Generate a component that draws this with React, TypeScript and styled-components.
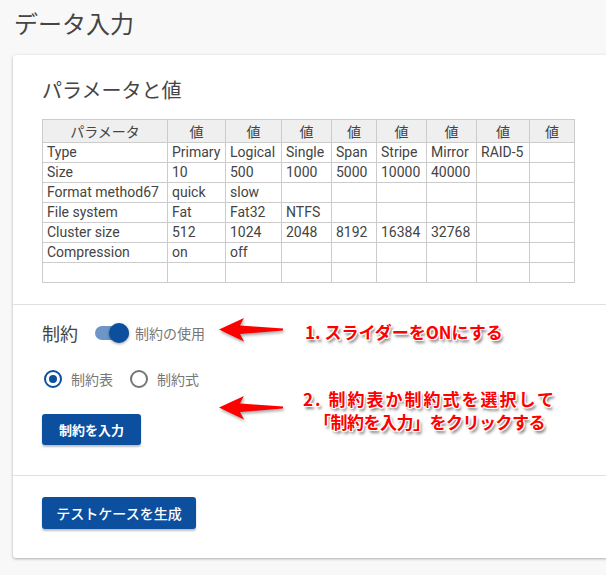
import React from "react";
import styled, { createGlobalStyle } from "styled-components";

const Global = createGlobalStyle`
  html, body { margin: 0; padding: 0; }
  body {
    background: #f8f8f8;
    overflow: hidden;
    font-family: Roboto, "Noto Sans CJK JP", sans-serif;
    color: #444;
  }
`;

const Page = styled.div`
  width: 606px;
  height: 575px;
  overflow: hidden;
`;

const Title = styled.h1`
  margin: 8px 0 18px 14px;
  font-size: 24px;
  font-weight: 400;
  line-height: 29px;
  color: #444;
  font-family: "Noto Sans CJK JP", sans-serif;
`;

const Card = styled.div`
  position: relative;
  margin-left: 13px;
  width: 620px;
  background: #fff;
  border-radius: 3px;
  box-shadow: 0 1px 3px rgba(0, 0, 0, 0.3);
`;

const Section = styled.section<{ $pt: number; $pb: number; $first?: boolean }>`
  padding: ${(p) => p.$pt}px 29px ${(p) => p.$pb}px 29px;
  border-top: ${(p) => (p.$first ? "none" : "1px solid #e0e0e0")};
`;

const Heading = styled.h2`
  margin: 0 0 15px 0;
  font-size: 20px;
  font-weight: 400;
  line-height: 28px;
  color: #444;
  font-family: "Noto Sans CJK JP", sans-serif;
`;

const Table = styled.table`
  border-collapse: collapse;
  table-layout: fixed;
  width: 532px;
  font-family: Roboto, "Noto Sans CJK JP", sans-serif;
  font-size: 14px;
  color: #444;
`;

const Th = styled.th`
  background: #efefef;
  border: 1px solid #cccccc;
  height: 22px;
  padding: 0 4px;
  font-weight: 400;
  text-align: center;
  font-family: "Noto Sans CJK JP", sans-serif;
  font-size: 14px;
  line-height: 22px;
`;

const Td = styled.td`
  border: 1px solid #cccccc;
  height: 19px;
  padding: 0 4px;
  line-height: 19px;
  white-space: nowrap;
  overflow: hidden;
`;

const Row = styled.div`
  display: flex;
  align-items: center;
  height: 24px;
`;

const SubHeading = styled.span`
  font-size: 18px;
  font-family: "Noto Sans CJK JP", sans-serif;
  color: #444;
  margin-right: 17px;
`;

const Switch = styled.span`
  position: relative;
  display: inline-block;
  width: 34px;
  height: 14px;
  border-radius: 7px;
  background: #6c96c8;
  margin-right: 6px;
`;

const Thumb = styled.span`
  position: absolute;
  right: 0;
  top: -3px;
  width: 20px;
  height: 20px;
  border-radius: 50%;
  background: #0b4f9e;
  box-shadow: 0 1px 3px rgba(0, 0, 0, 0.4);
`;

const MutedLabel = styled.span`
  font-size: 14px;
  color: #777;
  font-family: "Noto Sans CJK JP", sans-serif;
`;

const RadioRow = styled.div`
  display: flex;
  align-items: center;
  height: 20px;
  margin-top: 24px;
  padding-left: 2px;
`;

const RadioItem = styled.label`
  display: flex;
  align-items: center;
  margin-right: 17px;
`;

const RadioCircle = styled.span<{ $on?: boolean }>`
  box-sizing: border-box;
  width: 18px;
  height: 18px;
  border-radius: 50%;
  border: 2px solid ${(p) => (p.$on ? "#0b4f9e" : "#757575")};
  display: flex;
  align-items: center;
  justify-content: center;
  margin-right: 9px;
  &::after {
    content: "";
    display: ${(p) => (p.$on ? "block" : "none")};
    width: 8px;
    height: 8px;
    border-radius: 50%;
    background: #0b4f9e;
  }
`;

const Button = styled.button<{ $h: number; $w: number }>`
  display: block;
  height: ${(p) => p.$h}px;
  width: ${(p) => p.$w}px;
  padding: 0;
  background: #0b4f9e;
  color: #fff;
  border: none;
  border-radius: 3px;
  box-shadow: 0 2px 2px rgba(0, 0, 0, 0.25);
  font-family: "Noto Sans CJK JP", sans-serif;
  font-size: 13px;
  font-weight: 700;
  cursor: pointer;
`;

const Button1 = styled(Button)`
  margin-top: 25px;
`;

const Button2 = styled(Button)`
  font-weight: 500;
  font-size: 14px;
`;

const Arrow = styled.svg<{ $x: number; $y: number }>`
  position: absolute;
  left: ${(p) => p.$x}px;
  top: ${(p) => p.$y}px;
  filter: drop-shadow(1px 2px 1.5px rgba(0, 0, 0, 0.35));
`;

const Note = styled.div<{ $x: number; $y: number }>`
  position: absolute;
  left: ${(p) => p.$x}px;
  top: ${(p) => p.$y}px;
  display: flex;
  flex-direction: column;
  align-items: center;
  font-family: "Noto Sans CJK JP", sans-serif;
  font-weight: 700;
  font-size: 17px;
  line-height: 23px;
  color: #ff0000;
  white-space: nowrap;
  text-shadow:
    1px 0 0 #fff, -1px 0 0 #fff, 0 1px 0 #fff, 0 -1px 0 #fff,
    1px 1px 0 #fff, -1px -1px 0 #fff, 1px -1px 0 #fff, -1px 1px 0 #fff,
    2px 3px 3px rgba(0, 0, 0, 0.55);
`;

const NoteLine = styled.span<{ $ls?: number }>`
  letter-spacing: ${(p) => p.$ls ?? 0}px;
`;

const ArrowIcon = ({ x, y }: { x: number; y: number }) => (
  <Arrow $x={x} $y={y} width="66" height="25" viewBox="0 0 66 25">
    <polygon
      points="0,11.5 25,0 21,7.5 64,10.5 64,12.5 21,16 25,23.5"
      fill="#ff0000"
    />
  </Arrow>
);

const header = ["パラメータ", "値", "値", "値", "値", "値", "値", "値", "値"];
const widths = [125, 58, 56, 50, 45, 50, 50, 53, 45];
const rows: string[][] = [
  ["Type", "Primary", "Logical", "Single", "Span", "Stripe", "Mirror", "RAID-5", ""],
  ["Size", "10", "500", "1000", "5000", "10000", "40000", "", ""],
  ["Format method67", "quick", "slow", "", "", "", "", "", ""],
  ["File system", "Fat", "Fat32", "NTFS", "", "", "", "", ""],
  ["Cluster size", "512", "1024", "2048", "8192", "16384", "32768", "", ""],
  ["Compression", "on", "off", "", "", "", "", "", ""],
  ["", "", "", "", "", "", "", "", ""],
];

export default function App() {
  return (
    <Page>
      <Global />
      <Title>データ入力</Title>
      <Card>
        <Section $pt={21} $pb={21} $first>
          <Heading>パラメータと値</Heading>
          <Table>
            <colgroup>
              {widths.map((w, i) => (
                <col key={i} style={{ width: w }} />
              ))}
            </colgroup>
            <thead>
              <tr>
                {header.map((h, i) => (
                  <Th key={i}>{h}</Th>
                ))}
              </tr>
            </thead>
            <tbody>
              {rows.map((r, i) => (
                <tr key={i}>
                  {r.map((c, j) => (
                    <Td key={j}>{c}</Td>
                  ))}
                </tr>
              ))}
            </tbody>
          </Table>
        </Section>
        <Section $pt={16} $pb={30}>
          <Row>
            <SubHeading>制約</SubHeading>
            <Switch>
              <Thumb />
            </Switch>
            <MutedLabel>制約の使用</MutedLabel>
          </Row>
          <RadioRow>
            <RadioItem>
              <RadioCircle $on />
              <MutedLabel>制約表</MutedLabel>
            </RadioItem>
            <RadioItem>
              <RadioCircle />
              <MutedLabel>制約式</MutedLabel>
            </RadioItem>
          </RadioRow>
          <Button1 $h={31} $w={99}>制約を入力</Button1>
        </Section>
        <Section $pt={21} $pb={29}>
          <Button2 $h={32} $w={154}>テストケースを生成</Button2>
        </Section>
        <ArrowIcon x={206} y={263} />
        <Note $x={292} $y={265}>
          <NoteLine>1. スライダーをONにする</NoteLine>
        </Note>
        <ArrowIcon x={206} y={341} />
        <Note $x={290} $y={332}>
          <NoteLine $ls={2}>2. 制約表か制約式を選択して</NoteLine>
          <NoteLine $ls={-0.5}>「制約を入力」をクリックする</NoteLine>
        </Note>
      </Card>
    </Page>
  );
}
